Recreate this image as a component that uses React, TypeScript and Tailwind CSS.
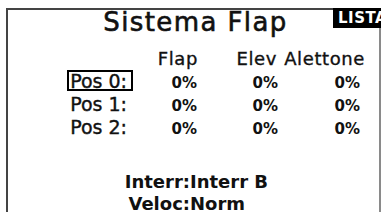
const rows = [
  { label: "Pos 0:", active: true },
  { label: "Pos 1:", active: false },
  { label: "Pos 2:", active: false },
];

const cols = ["Flap", "Elev", "Alettone"];

export default function App() {
  return (
    <div className="relative w-[381px] h-[212px] overflow-hidden bg-white text-[#111] font-['DejaVu_Sans',sans-serif]">
      {/* cornice dello schermo */}
      <div className="ml-[6px] mt-[8px] w-[375px] h-[240px] border-l-2 border-t-2 border-r-2 border-l-[#444] border-t-[#444] border-r-[#8a8a8a]">
        <h1 className="pl-[4px] text-center text-[26px] leading-[24px] tracking-[1.4px] [-webkit-text-stroke:0.6px_#111]">
          Sistema Flap
        </h1>

        <div className="mt-[13px] grid grid-cols-[125px_65px_79px_88px] items-baseline h-[23px] leading-[23px] text-[18px] tracking-[0.6px] [-webkit-text-stroke:0.35px_#111]">
          <div />
          {cols.map((c) => (
            <div key={c} className="text-right">{c}</div>
          ))}
        </div>

        {rows.map((r) => (
          <div key={r.label} className="grid grid-cols-[125px_64px_81px_82px] items-baseline h-[23px] leading-[23px]">
            <div className="text-right">
              <span
                className={
                  "inline-block border-2 pl-[1px] pr-[4px] pt-[2px] text-[19px] leading-[15px] [-webkit-text-stroke:0.4px_#111] " +
                  (r.active ? "border-black" : "border-transparent")
                }
              >
                {r.label}
              </span>
            </div>
            {cols.map((c) => (
              <div key={c} className="text-right text-[15px] font-bold">0%</div>
            ))}
          </div>
        ))}

        <div className="mt-[32px] text-[18px] font-bold">
          <div className="grid grid-cols-[182px_auto] h-[22px] leading-[22px]">
            <div className="text-right">Interr:</div>
            <div>Interr B</div>
          </div>
          <div className="grid grid-cols-[182px_auto] h-[22px] leading-[22px]">
            <div className="text-right">Veloc:</div>
            <div>Norm</div>
          </div>
        </div>
      </div>

      {/* etichetta LISTA */}
      <div className="absolute left-[333px] top-[8px] w-[52px] h-[20px] bg-black text-white text-[15px] font-bold leading-[20px] pl-[5px] tracking-[0.5px]">
        LISTA
      </div>
    </div>
  );
}
